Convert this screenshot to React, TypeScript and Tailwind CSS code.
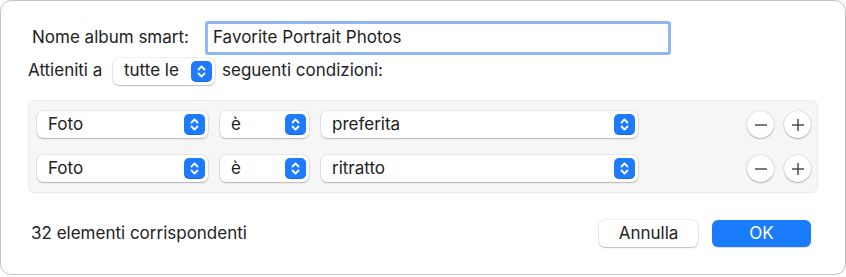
const font = { fontFamily: 'Inter, "Noto Sans", sans-serif' };

function Stepper() {
    return (
        <span className="flex h-[21px] w-[21px] items-center justify-center rounded-[5px] bg-[#1e7bff] shadow-[inset_0_-1px_0_rgba(0,0,0,0.15)]">
            <svg width="11" height="15" viewBox="0 0 11 15" fill="none" stroke="white" strokeWidth={1.8} strokeLinecap="round" strokeLinejoin="round">
                <path d="M2.5 5.5 L5.5 2.5 L8.5 5.5" />
                <path d="M2.5 9.5 L5.5 12.5 L8.5 9.5" />
            </svg>
        </span>
    );
}

function Popup({ label, className }: { label: string; className: string }) {
    return (
        <div className={`flex h-[27px] items-center justify-between rounded-[6px] bg-white pl-[11px] pr-[3px] text-[17px] text-[#222] shadow-[0_0_0_0.5px_rgba(0,0,0,0.12),0_1px_1.5px_rgba(0,0,0,0.22)] ${className}`}>
            <span>{label}</span>
            <Stepper />
        </div>
    );
}

function RoundButton({ plus }: { plus?: boolean }) {
    return (
        <button className="flex h-[27px] w-[27px] items-center justify-center rounded-full bg-white shadow-[0_0_0_0.5px_rgba(0,0,0,0.12),0_1px_1.5px_rgba(0,0,0,0.25)]">
            <svg width="14" height="14" viewBox="0 0 14 14" stroke="#333" strokeWidth={1.3}>
                <path d="M1 7 H13" />
                {plus && <path d="M7 1 V13" />}
            </svg>
        </button>
    );
}

function ConditionRow({ value }: { value: string }) {
    return (
        <div className="flex items-center">
            <Popup label="Foto" className="w-[171px]" />
            <Popup label="è" className="ml-[12px] w-[89px]" />
            <Popup label={value} className="ml-[12px] w-[317px]" />
            <div className="ml-auto flex gap-[10px]">
                <RoundButton />
                <RoundButton plus />
            </div>
        </div>
    );
}

export default function App() {
    return (
        <div className="h-[277px] w-[846px] bg-white" style={font}>
            <div className="flex h-[275px] flex-col rounded-[11px] border border-[#c4c4c4] bg-white pl-[27px] pr-[27px] text-[#222]">
                {/* Nome */}
                <div className="mt-[20px] flex h-[34px] items-center">
                    <span className="w-[177px] pl-[4px] text-[17px]">Nome album smart:</span>
                    <div className="flex h-[34px] w-[466px] items-center rounded-[3px] border-[3px] border-[#8fb7f5] bg-white pl-[5px] text-[17px] text-[#1d1d1d]">
                        Favorite Portrait Photos
                    </div>
                </div>

                {/* Attieniti */}
                <div className="mt-[3px] flex h-[26px] items-center text-[17px]">
                    <span className="w-[85px]">Attieniti a</span>
                    <Popup label="tutte le" className="h-[26px] w-[102px] pl-[11px]" />
                    <span className="ml-[7px]">seguenti condizioni:</span>
                </div>

                {/* Condizioni */}
                <div className="mt-[16px] flex w-[790px] flex-col gap-[17px] rounded-[6px] border border-[#ececec] bg-[#f6f6f6] py-[10px] pl-[8px] pr-[6px]">
                    <ConditionRow value="preferita" />
                    <ConditionRow value="ritratto" />
                </div>

                {/* Footer */}
                <div className="mt-[27px] flex items-center pr-[7px]">
                    <span className="pl-[3px] text-[17px]">32 elementi corrispondenti</span>
                    <button className="ml-auto h-[27px] w-[99px] rounded-[6px] bg-white text-[17px] text-[#222] shadow-[0_0_0_0.5px_rgba(0,0,0,0.12),0_1px_1.5px_rgba(0,0,0,0.22)]">
                        Annulla
                    </button>
                    <button className="ml-[14px] h-[27px] w-[99px] rounded-[6px] bg-[#1a7bfb] text-[17px] text-white shadow-[0_1px_1px_rgba(0,0,0,0.15)]">
                        OK
                    </button>
                </div>
            </div>
        </div>
    );
}
